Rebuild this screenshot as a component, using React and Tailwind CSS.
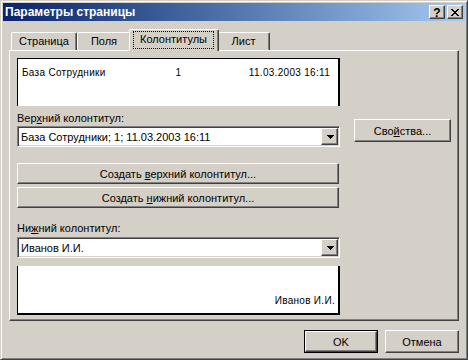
import React from "react";

const raised =
  "border border-t-white border-l-white border-r-[#404040] border-b-[#404040] shadow-[inset_-1px_-1px_0_#808080] bg-[#D4D0C8]";
const sunken =
  "border border-t-[#808080] border-l-[#808080] border-r-white border-b-white shadow-[inset_1px_1px_0_#404040,inset_-1px_-1px_0_#D4D0C8]";

function Arrow() {
  return (
    <svg width="7" height="4" viewBox="0 0 7 4" shapeRendering="crispEdges">
      <path d="M0 0h7v1H0zM1 1h5v1H1zM2 2h3v1H2zM3 3h1v1H3z" fill="#000" />
    </svg>
  );
}

function CloseGlyph() {
  return (
    <svg width="8" height="7" viewBox="0 0 8 7" shapeRendering="crispEdges">
      <path
        d="M0 0h2v1H0zM6 0h2v1H6zM1 1h2v1H1zM5 1h2v1H5zM2 2h4v1H2zM3 3h2v1H3zM2 4h4v1H2zM1 5h2v1H1zM5 5h2v1H5zM0 6h2v1H0zM6 6h2v1H6z"
        fill="#000"
      />
    </svg>
  );
}

function Combo({ value }) {
  return (
    <div className={`h-[21px] w-[323px] bg-white ${sunken} flex p-px`}>
      <div className="flex-1 flex items-center pl-[2px] pt-px whitespace-nowrap overflow-hidden">
        {value}
      </div>
      <div className={`w-[17px] h-[17px] ${raised} flex items-center justify-center pl-px`}>
        <Arrow />
      </div>
    </div>
  );
}

function Button({ children, className = "" }) {
  return (
    <div className={`${raised} flex items-center justify-center pt-[2px] ${className}`}>
      <span>{children}</span>
    </div>
  );
}

function Tab({ label, w }) {
  return (
    <div
      className={`h-[18px] ${w} bg-[#D4D0C8] border-t border-l border-r border-t-white border-l-white border-r-[#404040] shadow-[inset_-1px_0_0_#808080] rounded-t-[2px] flex justify-center pt-[2px]`}
    >
      <span>{label}</span>
    </div>
  );
}

export default function App() {
  return (
    <div className="w-[468px] h-[360px] bg-[#D4D0C8] border border-t-[#D4D0C8] border-l-[#D4D0C8] border-r-[#404040] border-b-[#404040] shadow-[inset_1px_1px_0_#fff,inset_-1px_-1px_0_#808080] p-[2px] text-[11px] leading-[13px] text-black font-['Liberation_Sans',Arial,sans-serif] flex flex-col select-none">
      {/* Title bar */}
      <div className="h-[18px] flex items-center bg-linear-to-r from-[#0A246A] to-[#A6CAF0] pl-[2px] pr-[2px]">
        <span className="text-white font-bold text-[12px] leading-[14px]">Параметры страницы</span>
        <div className="ml-auto flex gap-[2px]">
          <div className={`w-[16px] h-[14px] ${raised} flex items-center justify-center`}>
            <span className="font-bold text-[12px] leading-[12px] pt-px">?</span>
          </div>
          <div className={`w-[16px] h-[14px] ${raised} flex items-center justify-center pr-px`}>
            <CloseGlyph />
          </div>
        </div>
      </div>

      <div className="px-[6px] flex flex-col">
        {/* Tabs */}
        <div className="mt-[8px] pl-[2px] flex items-end">
          <Tab label="Страница" w="w-[66px]" />
          <Tab label="Поля" w="w-[54px]" />
          <div className="relative z-10 -mx-[2px] -mb-px h-[22px] w-[90px] bg-[#D4D0C8] border-t border-l border-r border-t-white border-l-white border-r-[#404040] shadow-[inset_-1px_0_0_#808080] rounded-t-[2px] flex justify-center pt-px pr-px">
            <span className="w-[81px] h-[18px] border border-dotted border-black flex justify-center pt-px">
              Колонтитулы
            </span>
          </div>
          <Tab label="Лист" w="w-[53px]" />
        </div>

        {/* Panel */}
        <div className="h-[271px] w-[450px] border border-t-white border-l-white border-r-[#404040] border-b-[#404040] shadow-[inset_-1px_-1px_0_#808080] pl-[7px] pt-[7px] flex">
          <div className="flex flex-col w-[323px]">
            {/* header preview */}
            <div className="w-[323px] h-[48px] bg-white border-t border-l border-r-2 border-black grid grid-cols-[1fr_auto_1fr] pl-[4px] pr-[3px] pt-[8px] text-[10px] leading-[12px] tracking-[0.3px]">
              <span className="text-left whitespace-nowrap">База Сотрудники</span>
              <span>1</span>
              <span className="text-right pr-[5px] whitespace-nowrap">11.03.2003 16:11</span>
            </div>
            <div className="mt-[6px] h-[13px]">
              Вер<span className="underline">х</span>ний колонтитул:
            </div>
            <div className="mt-px">
              <Combo value="База Сотрудники; 1; 11.03.2003 16:11" />
            </div>
            <Button className="mt-[16px] h-[21px] w-[322px]">
              Создать <span className="underline">в</span>ерхний колонтитул...
            </Button>
            <Button className="mt-[3px] h-[21px] w-[322px]">
              Создать <span className="underline">н</span>ижний колонтитул...
            </Button>
            <div className="mt-[14px] h-[13px]">
              Ни<span className="underline">ж</span>ний колонтитул:
            </div>
            <div className="mt-[2px]">
              <Combo value="Иванов И.И." />
            </div>
            {/* footer preview */}
            <div className="mt-[8px] w-[323px] h-[49px] bg-white border-l border-r-2 border-b-2 border-black flex items-end justify-end pr-[3px] pb-[6px] text-[10px] leading-[12px] tracking-[0.3px]">
              <span>Иванов И.И.</span>
            </div>
          </div>
          <div className="ml-[14px] mt-[61px]">
            <Button className="h-[23px] w-[97px]">
              Сво<span className="underline">й</span>ства...
            </Button>
          </div>
        </div>

        {/* Bottom buttons */}
        <div className="mt-[9px] flex justify-end gap-[7px]">
          <div className="w-[74px] h-[23px] border border-black flex">
            <Button className="flex-1">OK</Button>
          </div>
          <Button className="w-[74px] h-[23px]">Отмена</Button>
        </div>
      </div>
    </div>
  );
}
